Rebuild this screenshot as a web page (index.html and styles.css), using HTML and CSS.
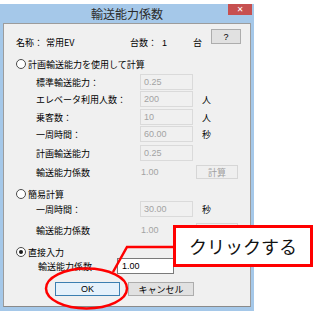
FILE: index.html
```html
<!DOCTYPE html>
<html lang="ja">
<head>
    <meta charset="UTF-8">
    <title>輸送能力係数</title>
    <link rel="stylesheet" href="styles.css">
</head>
<body>

    <div class="window">
        <div class="titlebar">
            <span></span>
            <span class="title">輸送能力係数</span>
            <span class="close">✕</span>
        </div>
        <div class="client">
            <div class="head">
                <span class="k1">名称：</span>
                <span class="v1">常用EV</span>
                <span class="k2">台数：</span>
                <span class="v2">1</span>
                <span class="u">台</span>
                <span class="btn help">?</span>
            </div>

            <div class="radio-row r1"><span class="radio"></span>計画輸送能力を使用して計算</div>
            <div class="frow m3"><span class="lbl">標準輸送能力：</span><span class="box">0.25</span></div>
            <div class="frow m1"><span class="lbl">エレベータ利用人数：</span><span class="box">200</span><span class="unit">人</span></div>
            <div class="frow m2"><span class="lbl">乗客数：</span><span class="box">10</span><span class="unit">人</span></div>
            <div class="frow m1"><span class="lbl">一周時間：</span><span class="box">60.00</span><span class="unit">秒</span></div>
            <div class="frow m3"><span class="lbl">計画輸送能力</span><span class="box">0.25</span></div>
            <div class="crow m4"><span class="lbl">輸送能力係数</span><span class="val">1.00</span><span class="btn calc">計算</span></div>

            <div class="radio-row r2"><span class="radio"></span>簡易計算</div>
            <div class="frow"><span class="lbl">一周時間：</span><span class="box">30.00</span><span class="unit">秒</span></div>
            <div class="crow m6"><span class="lbl">輸送能力係数</span><span class="val">1.00</span><span class="btn calc">計算</span></div>

            <div class="radio-row r3"><span class="radio on"></span>直接入力</div>
            <div class="drow"><span class="lbl">輸送能力係数</span><span class="input">1.00</span></div>

            <div class="actions">
                <span class="btn ok">OK</span>
                <span class="btn cancel">キャンセル</span>
            </div>
        </div>
    </div>

    <div class="callout">クリックする</div>

    <svg class="marks" width="316" height="315" viewBox="0 0 316 315">
        <polyline points="174,247 127,247 113,272" fill="none" stroke="#ff0000" stroke-width="2.5"/>
        <ellipse cx="86.5" cy="288.5" rx="40.5" ry="20" fill="none" stroke="#ff0000" stroke-width="2.5"/>
    </svg>

</body>
</html>
```

FILE: styles.css
```css
body { margin: 0; background: #fff; font-family: "Noto Sans CJK JP", sans-serif; font-size: 9px; color: #000; width: 316px; height: 315px; position: relative; overflow: hidden; }

.window { margin-top: 4px; width: 254px; height: 307px; background: #a5c8e9; display: flex; flex-direction: column; }
.titlebar { height: 19px; display: grid; grid-template-columns: 1fr auto 1fr; align-items: center; }
.title { font-size: 12px; color: #2b2b2b; }
.close { justify-self: end; align-self: start; width: 24px; height: 11px; margin-right: 2px; background: #c75050; color: #fff; font-size: 8px; line-height: 11px; text-align: center; font-family: "DejaVu Sans", sans-serif; font-weight: bold; }

.client { margin: 0 3px; height: 284px; box-sizing: border-box; background: #f0f0f0; border: 1px solid #9c9c9c; border-bottom-color: #8a8a8a; display: flex; flex-direction: column; }

.head { margin-top: 5px; height: 21px; display: flex; padding-left: 12px; }
.head > span:not(.btn) { align-self: flex-end; line-height: 14px; }
.k1 { width: 30px; }
.v1 { width: 84px; }
.k2 { width: 32px; }
.v2 { width: 31px; font-family: "Liberation Sans", sans-serif; }
.u { width: 18px; }

.btn { box-sizing: border-box; display: flex; align-items: center; justify-content: center; background: #e1e1e1; border: 1px solid #adadad; }
.help { width: 30px; height: 15px; font-family: "Liberation Sans", sans-serif; font-size: 9px; }

.radio-row { height: 14px; display: flex; align-items: center; padding-left: 12px; }
.r1 { margin-top: 7px; }
.r2 { margin-top: 8px; }
.r3 { margin-top: 9px; height: 12px; }
.radio { width: 10px; height: 10px; box-sizing: border-box; border: 1px solid #4a4a4a; border-radius: 50%; background: #fff; margin-right: 2px; display: flex; align-items: center; justify-content: center; }
.radio.on::after { content: ""; width: 4px; height: 4px; border-radius: 50%; background: #1a1a1a; }

.frow, .crow, .drow { display: flex; align-items: center; padding-left: 32px; }
.frow { height: 16px; }
.crow { height: 14px; }
.m1 { margin-top: 1px; }
.m2 { margin-top: 2px; }
.m3 { margin-top: 3px; }
.m4 { margin-top: 4px; }
.m6 { margin-top: 6px; }

.lbl { width: 104px; }
.box { width: 53px; height: 16px; box-sizing: border-box; border: 1px solid #dadada; color: #a3a3a3; padding-left: 3px; display: flex; align-items: center; font-family: "Liberation Sans", sans-serif; }
.val { width: 53px; padding-left: 1px; box-sizing: border-box; color: #a3a3a3; font-family: "Liberation Sans", sans-serif; }
.unit { margin-left: 9px; }
.calc { width: 42px; height: 14px; margin-left: 3px; background: #efefef; border-color: #d6d6d6; color: #a0a0a0; }

.drow { height: 16px; padding-left: 34px; }
.drow .lbl { width: 79px; }
.input { width: 57px; height: 16px; box-sizing: border-box; border: 1px solid #7a7a7a; background: #fff; padding-left: 4px; display: flex; align-items: center; font-family: "Liberation Sans", sans-serif; }

.actions { margin-top: 8px; height: 14px; display: flex; padding-left: 51px; gap: 8px; }
.ok { width: 65px; height: 14px; border-color: #3c7fb1; background: #e5f1fb; font-family: "Liberation Sans", sans-serif; }
.cancel { width: 66px; height: 14px; }

.callout { position: absolute; left: 173px; top: 225px; width: 140px; height: 42px; box-sizing: border-box; border: 3px solid #ff0000; background: #fff; display: flex; align-items: center; justify-content: center; font-size: 18px; color: #111; }
.marks { position: absolute; left: 0; top: 0; pointer-events: none; }
```
